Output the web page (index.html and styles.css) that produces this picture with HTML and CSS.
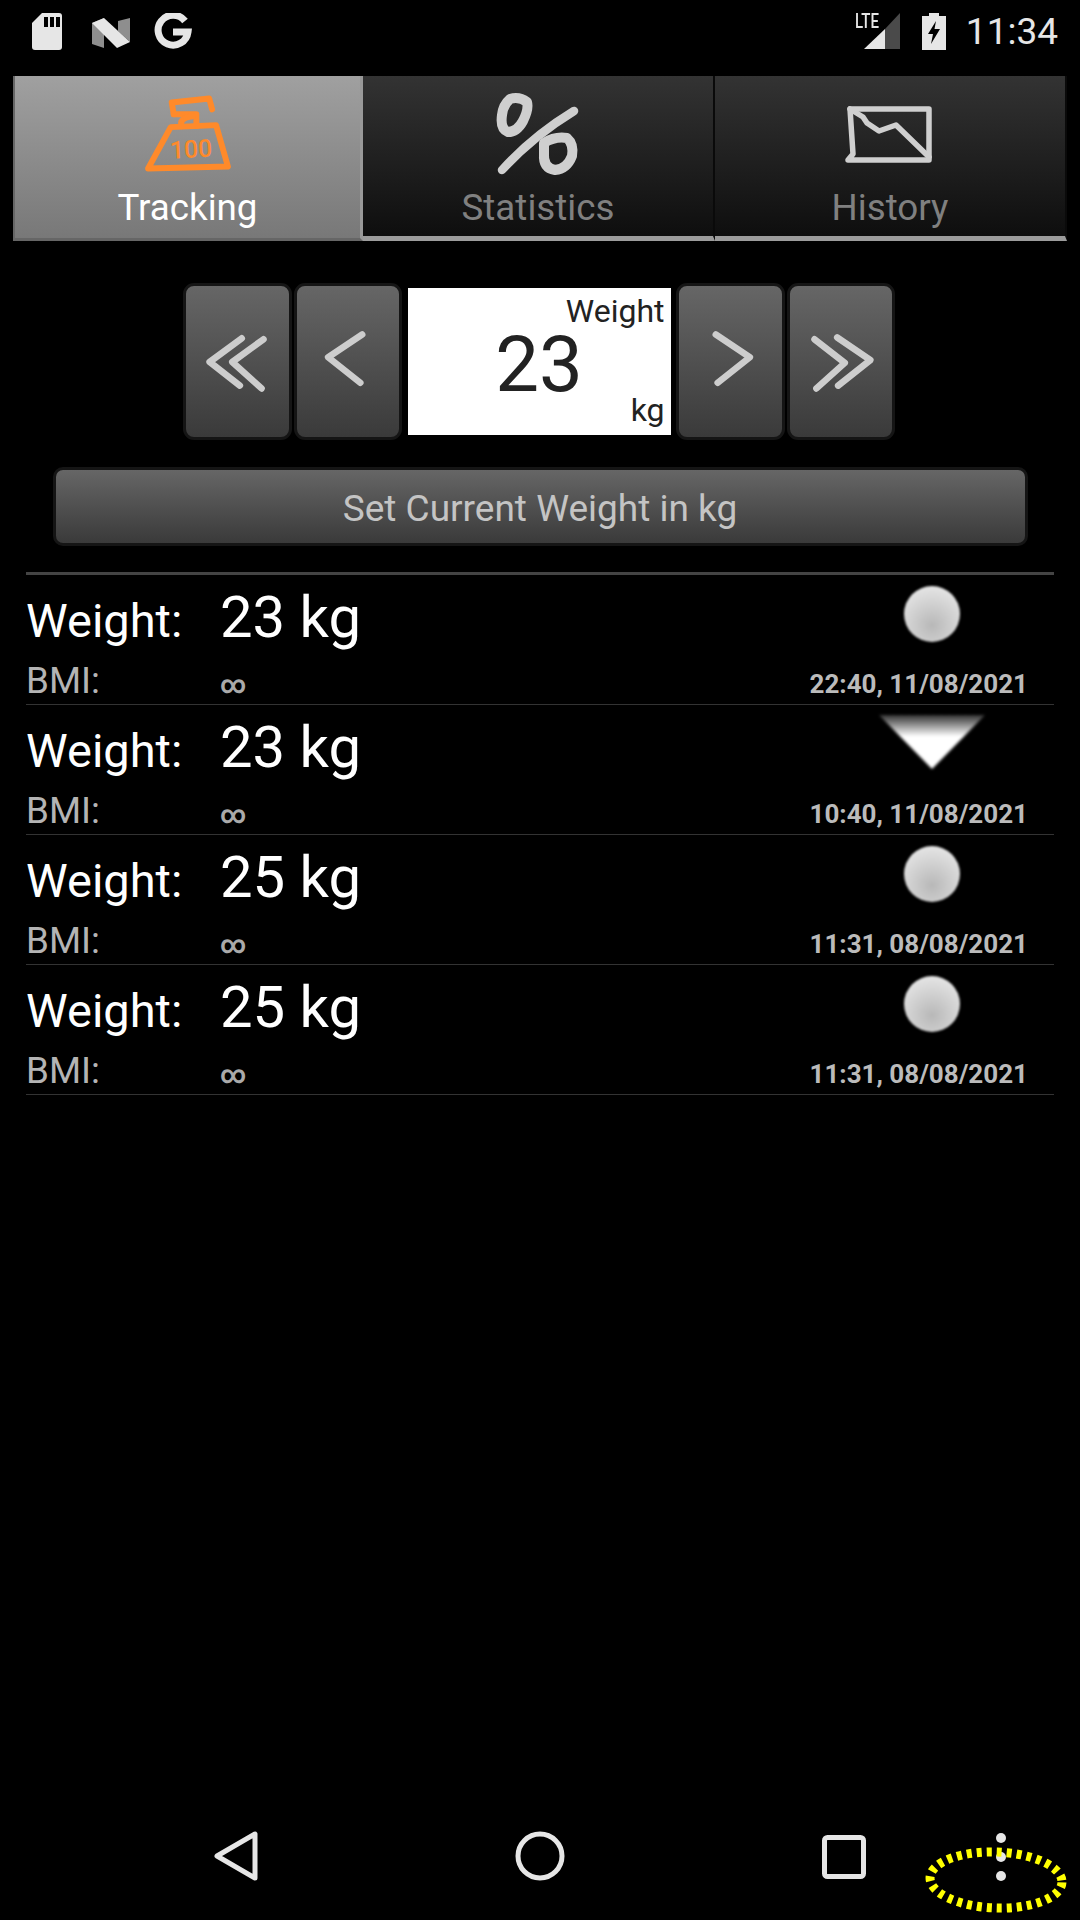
FILE: index.html
```html
<!DOCTYPE html>
<html lang="en">
<head>
    <meta charset="UTF-8">
    <meta name="viewport" content="width=device-width, initial-scale=1.0">
    <title>Weight Tracking</title>
    <link rel="stylesheet" href="styles.css">
</head>
<body>
<div class="screen">

    <!-- Status bar -->
    <div class="status-bar">
        <div class="status-left">
            <svg class="st-sd" viewBox="0 0 30 37">
                <path d="M10 0H27a3 3 0 0 1 3 3V34a3 3 0 0 1-3 3H3a3 3 0 0 1-3-3V10Z" fill="#e6e6e6"/>
                <path d="M12 4h4v10h-4zM18 4h4v10h-4zM24 4h4v10h-4z" fill="#000"/>
            </svg>
            <svg class="st-n" viewBox="0 0 38 30">
                <path d="M0 5 12 0V30L0 26Z" fill="#8e8e8e"/>
                <path d="M26 3 38 0V24L26 13Z" fill="#8e8e8e"/>
                <path d="M0 5 12 0 38 24 25 30Z" fill="#e6e6e6"/>
            </svg>
            <svg class="st-g" viewBox="0 0 38 38">
                <path d="M31 8A15 15 0 1 0 34 19H19" fill="none" stroke="#e6e6e6" stroke-width="7"/>
            </svg>
        </div>
        <div class="status-right">
            <div class="st-signal">
                <span class="lte">LTE</span>
                <svg viewBox="0 0 36 36">
                    <path d="M0 36 21 16V36Z" fill="#e6e6e6"/>
                    <path d="M21 16 36 0V36H21Z" fill="#4a4a4a"/>
                </svg>
            </div>
            <svg class="st-batt" viewBox="0 0 24 37">
                <path d="M7 0H17V3H24V37H0V3H7Z" fill="#e6e6e6"/>
                <path d="M14 8 6 21H11L9 31 18 16H12.5Z" fill="#000"/>
            </svg>
            <span class="clock">11:34</span>
        </div>
    </div>

    <!-- Tabs -->
    <div class="tabs">
        <div class="tab active">
            <svg class="tab-icon" viewBox="0 0 350 120">
                <g fill="none" stroke="#ff8a2a" stroke-width="6" stroke-linejoin="round" stroke-linecap="round">
                    <path d="M161 38 159 26 197 22 200 33"/>
                    <path d="M161 38H184V50"/>
                    <path d="M180 40Q166 42 169 50"/>
                    <path d="M158 51 204 49 216 91 135 93Z"/>
                </g>
                <text class="kg-100" x="179" y="82" transform="rotate(-3 179 82)">100</text>
            </svg>
            <span>Tracking</span>
        </div>
        <div class="tab">
            <svg class="tab-icon" viewBox="0 0 350 120">
                <g fill="none" stroke="#cfcfcf" stroke-linejoin="round" stroke-linecap="round">
                    <path stroke-width="10" d="M147 23Q156 20 164 26 166 33 160 45 154 56 145 56 137 53 139 39 140 29 147 23Z"/>
                    <path stroke-width="8.5" d="M139 94Q170 60 211 35"/>
                    <path stroke-width="10" d="M181 67Q192 60 204 62 211 68 209 80 204 93 192 94 180 92 181 78Z"/>
                </g>
            </svg>
            <span>Statistics</span>
        </div>
        <div class="tab">
            <svg class="tab-icon" viewBox="0 0 350 120">
                <g fill="none" stroke="#cfcfcf" stroke-width="5.5" stroke-linejoin="round" stroke-linecap="round">
                    <path d="M135 33H214V84H133L138 78Z"/>
                    <path d="M135 33 148 41 152 47 164 55 181 49 214 81"/>
                </g>
            </svg>
            <span>History</span>
        </div>
    </div>

    <!-- Weight picker -->
    <div class="picker">
        <button class="step">
            <svg viewBox="0 0 108 157"><path d="M59 54 25 79 57 104M82 55 49 79 80 107"/></svg>
        </button>
        <button class="step">
            <svg viewBox="0 0 108 157"><path d="M69 50 33 74 67 101"/></svg>
        </button>
        <div class="value-box">
            <span class="value-label">Weight</span>
            <span class="value-num">23</span>
            <span class="value-unit">kg</span>
        </div>
        <button class="step">
            <svg viewBox="0 0 108 157"><path d="M39 50 75 74 41 101"/></svg>
        </button>
        <button class="step">
            <svg viewBox="0 0 108 157"><path d="M26 55 58 80 28 107M50 53 85 77 51 104"/></svg>
        </button>
    </div>

    <button class="set-btn">Set Current Weight in kg</button>

    <!-- History list -->
    <div class="entries">
        <div class="entry">
            <span class="lbl">Weight:</span>
            <span class="val">23 kg</span>
            <div class="mark"><div class="dot"></div></div>
            <span class="lbl-sm">BMI:</span>
            <span class="val-sm">∞</span>
            <span class="when">22:40, 11/08/2021</span>
        </div>
        <div class="entry">
            <span class="lbl">Weight:</span>
            <span class="val">23 kg</span>
            <div class="mark">
                <svg class="down" viewBox="0 0 110 64">
                    <defs>
                        <linearGradient id="fade" x1="0" y1="0" x2="0" y2="1">
                            <stop offset="0" stop-color="#333"/>
                            <stop offset="0.4" stop-color="#fff"/>
                        </linearGradient>
                    </defs>
                    <path d="M2 3H108L55 57Z" fill="url(#fade)"/>
                </svg>
            </div>
            <span class="lbl-sm">BMI:</span>
            <span class="val-sm">∞</span>
            <span class="when">10:40, 11/08/2021</span>
        </div>
        <div class="entry">
            <span class="lbl">Weight:</span>
            <span class="val">25 kg</span>
            <div class="mark"><div class="dot"></div></div>
            <span class="lbl-sm">BMI:</span>
            <span class="val-sm">∞</span>
            <span class="when">11:31, 08/08/2021</span>
        </div>
        <div class="entry">
            <span class="lbl">Weight:</span>
            <span class="val">25 kg</span>
            <div class="mark"><div class="dot"></div></div>
            <span class="lbl-sm">BMI:</span>
            <span class="val-sm">∞</span>
            <span class="when">11:31, 08/08/2021</span>
        </div>
    </div>

    <!-- Navigation bar -->
    <div class="nav-bar">
        <svg class="nav-icon" viewBox="0 0 44 50">
            <path d="M3 25 41 3V47Z"/>
        </svg>
        <svg class="nav-icon" viewBox="0 0 50 50">
            <circle cx="25" cy="25" r="22"/>
        </svg>
        <svg class="nav-icon" viewBox="0 0 44 44">
            <rect x="2.5" y="2.5" width="39" height="39" rx="3"/>
        </svg>
        <div class="menu-dots"><i></i><i></i><i></i></div>
        <!-- hand-marked highlight round the overflow menu -->
        <svg class="highlight" viewBox="0 0 150 76">
            <ellipse cx="75" cy="38" rx="66" ry="28" transform="rotate(2 75 38)"/>
        </svg>
    </div>

</div>
</body>
</html>
```

FILE: styles.css
```css
* {
    margin: 0;
    padding: 0;
    box-sizing: border-box;
}

body {
    background: black;
    font-family: 'Roboto', 'Liberation Sans', sans-serif;
    color: white;
}

.screen {
    width: 1080px;
    height: 1920px;
    display: flex;
    flex-direction: column;
    overflow: hidden;
}

/* status bar */
.status-bar {
    height: 76px;
    flex: none;
    display: flex;
    justify-content: space-between;
    padding: 13px 22px 0 32px;
}

.status-left, .status-right {
    display: flex;
    align-items: flex-start;
}

.st-sd {
    width: 30px;
    height: 37px;
}

.st-n {
    width: 38px;
    height: 30px;
    margin: 5px 0 0 30px;
}

.st-g {
    width: 38px;
    height: 38px;
    margin-left: 24px;
}

.st-signal {
    position: relative;
    width: 46px;
    height: 36px;
}

.st-signal svg {
    width: 36px;
    height: 36px;
    margin-left: 10px;
    display: block;
}

.lte {
    position: absolute;
    left: 1px;
    top: -2px;
    font-size: 20px;
    line-height: 20px;
    font-weight: 500;
    transform: scaleX(0.75);
    transform-origin: left top;
    color: #e6e6e6;
}

.st-batt {
    width: 24px;
    height: 37px;
    margin-left: 22px;
}

.clock {
    font-size: 37px;
    line-height: 37px;
    margin-left: 20px;
    color: #e6e6e6;
}

/* tabs */
.tabs {
    margin: 0 13px;
    height: 165px;
    flex: none;
    display: flex;
}

.tab {
    width: 352px;
    flex: none;
    display: flex;
    flex-direction: column;
    align-items: center;
    background: linear-gradient(#333333, #0e0e0e);
    border-bottom: 5px solid #9c9c9c;
    border-right: 2px solid #0a0a0a;
    font-size: 36.75px;
    color: #808080;
    line-height: 32px;
}

.tab span {
    margin-top: -4px;
}

.tab.active {
    width: 350px;
    background: linear-gradient(#a0a0a0, #787878);
    border-left: 2px solid #666;
    border-right: 3px solid #999;
    border-bottom: 3px solid #666;
    color: white;
}

.tab-icon {
    width: 100%;
    height: 120px;
    flex: none;
    display: block;
}

.kg-100 {
    font-size: 25px;
    font-weight: 500;
    fill: #ff8a2a;
    text-anchor: middle;
}

/* picker */
.picker {
    margin-top: 42px;
    padding-right: 2px;
    flex: none;
    display: flex;
    justify-content: center;
    align-items: center;
    gap: 2px;
}

.step {
    width: 108.5px;
    height: 157px;
    border: 3px solid #151515;
    border-radius: 11px;
    background: linear-gradient(#666666, #3a3a3a);
}

.step svg {
    display: block;
    width: 102px;
    height: 151px;
}

.step path {
    fill: none;
    stroke: #cdcdcd;
    stroke-width: 7;
    stroke-linecap: round;
    stroke-linejoin: round;
}

.value-box {
    width: 263px;
    height: 147px;
    margin: 0 3.5px;
    padding: 4px 6px 6px 0;
    background: white;
    color: #222;
    display: grid;
}

.value-box span {
    grid-area: 1 / 1;
}

.value-label, .value-unit {
    font-size: 32px;
    justify-self: end;
}

.value-label {
    align-self: start;
}

.value-unit {
    align-self: end;
}

.value-num {
    font-size: 78px;
    margin: 7px 0 0 6px;
    justify-self: center;
    align-self: center;
}

.set-btn {
    width: 975px;
    height: 79px;
    margin: 27px auto 0;
    padding-top: 3px;
    flex: none;
    display: block;
    border: 3px solid #151515;
    border-radius: 10px;
    background: linear-gradient(#666666, #3a3a3a);
    font-family: inherit;
    font-size: 37px;
    color: #c4c4c4;
}

/* entries */
.entries {
    flex: 1;
    margin: 26px 26px 0;
    border-top: 3px solid #444;
}

.entry {
    height: 130px;
    padding: 8px 26px 0 0;
    border-bottom: 1px solid #333;
    display: grid;
    grid-template-columns: 194px 1fr auto;
    grid-template-rows: 76px 45px;
    align-items: baseline;
}

.lbl {
    font-size: 47px;
}

.val {
    font-size: 58px;
}

.lbl-sm {
    font-size: 36.75px;
    color: #b4b4b4;
}

.val-sm {
    font-size: 25px;
    font-weight: 700;
    color: #aaaaaa;
}

.when {
    font-size: 26px;
    font-weight: 700;
    color: #bbbbbb;
    justify-self: end;
}

.mark {
    align-self: start;
    justify-self: end;
    width: 110px;
    margin-right: 41px;
    display: flex;
    justify-content: center;
}

.dot {
    width: 56px;
    height: 56px;
    margin-top: 3px;
    border-radius: 50%;
    background: radial-gradient(circle at 50% 70%, #b8b8b8, #e4e4e4 80%);
    filter: blur(1px);
}

.down {
    width: 110px;
    height: 64px;
    margin-top: -1px;
    display: block;
    filter: blur(1.5px);
}

/* navigation */
.nav-bar {
    height: 126px;
    flex: none;
    position: relative;
    display: grid;
    grid-template-columns: 304px 304px 304px 1fr;
    padding-left: 84px;
    align-items: start;
    justify-items: center;
}

.nav-icon {
    margin-top: 37px;
    fill: none;
    stroke: #e6e6e6;
    stroke-width: 5;
    stroke-linejoin: round;
    display: block;
}

.nav-icon:nth-child(1) {
    width: 44px;
    height: 50px;
}

.nav-icon:nth-child(2) {
    width: 50px;
    height: 50px;
}

.nav-icon:nth-child(3) {
    width: 44px;
    height: 44px;
    margin-top: 41px;
}

.menu-dots {
    justify-self: start;
    margin-top: 39px;
    display: flex;
    flex-direction: column;
    gap: 9px;
}

.menu-dots i {
    width: 10px;
    height: 10px;
    border-radius: 50%;
    background: #e6e6e6;
    display: block;
}

.highlight {
    position: absolute;
    left: 921px;
    top: 48px;
    width: 150px;
    height: 76px;
    fill: none;
    stroke: #ffff00;
    stroke-width: 9;
    stroke-dasharray: 5 5;
}
```
